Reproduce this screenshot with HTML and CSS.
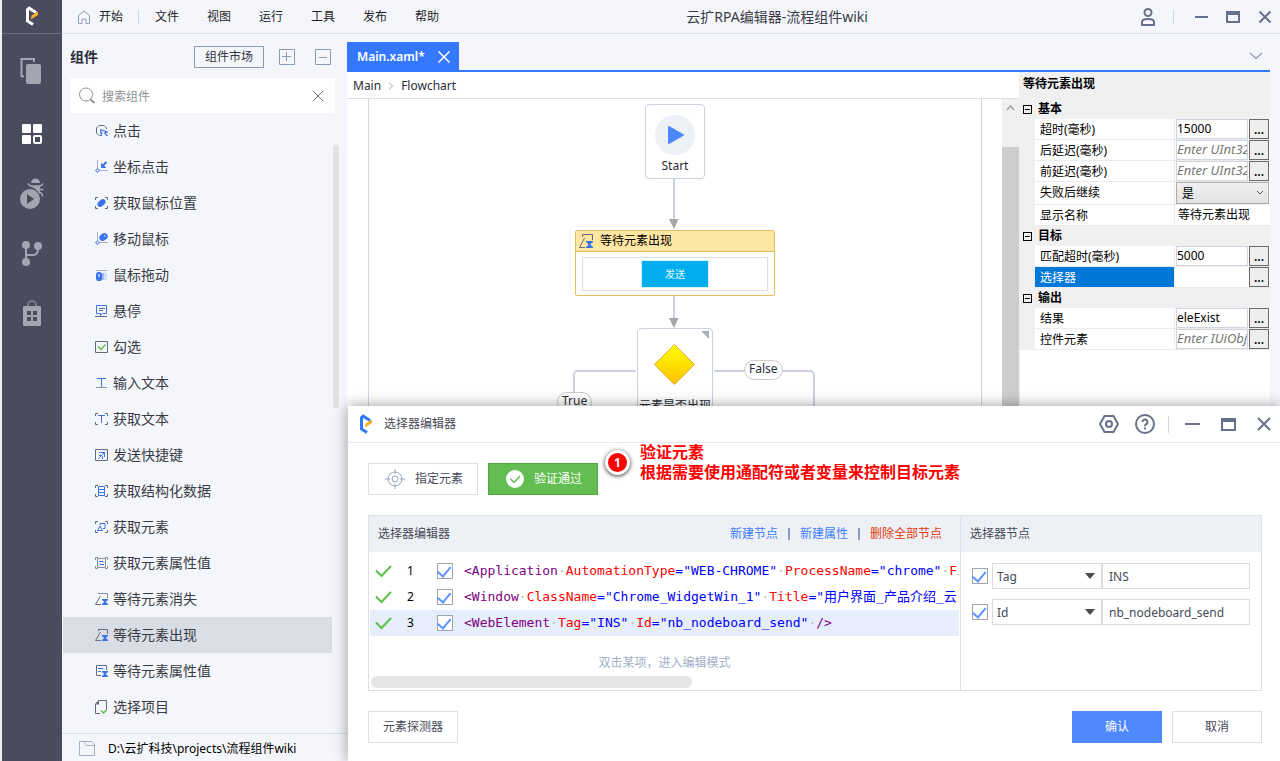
FILE: index.html
```html
<!DOCTYPE html>
<html lang="zh-CN">
<head>
<meta charset="utf-8">
<title>云扩RPA编辑器-流程组件wiki</title>
<link rel="stylesheet" href="styles.css">
</head>
<body>
<div class="app">
  <nav class="rail" aria-label="主导航">
    <div class="rail-logo">
      <svg width="14" height="21" viewBox="0 0 14 21"><path d="M8 18.500 2.500 15V3.600L4.200 2.200 11 6.600" fill="none" stroke="#fff" stroke-width="3"/><path d="M6.500 9.600 13 5.600V9L6 13.400z" fill="#fbb02d"/></svg>
    </div>
    <button class="rail-btn" aria-label="复制"><svg width="24" height="28" viewBox="0 0 24 28"><path d="M4 19.500H1.500M1.500 20V2H14v3" fill="none" stroke="#a3a5b0" stroke-width="2"/><rect x="6" y="7" width="15" height="20" rx="2" fill="#a3a5b0"/></svg></button>
    <button class="rail-btn" aria-label="组件"><svg width="22" height="22" viewBox="0 0 22 22"><g fill="#fff"><rect x="1" y="1" width="9" height="9" rx="1"/><rect x="12" y="1" width="9" height="9" rx="1"/><rect x="1" y="12" width="9" height="9" rx="1"/></g><rect x="13" y="13" width="7" height="7" rx="1" fill="none" stroke="#fff" stroke-width="2"/></svg></button>
    <button class="rail-btn" aria-label="调试"><svg width="24" height="32" viewBox="0 0 24 32"><circle cx="10" cy="21" r="10" fill="#a3a5b0"/><path d="M7 16v10l7-5z" fill="#4a4c5e"/><path d="M11 5a4.500 4.500 0 0 1 9 0z" fill="#a3a5b0"/><path d="M11 8h9v4c0 2-1 3-1 4-1-3-4-6-8-7z" fill="#a3a5b0"/><path d="M8 5.500c1 2 2 2.500 4 2.500h7c2 0 3-.5 4-2.500M19 11.500h4.500M19 14.500c2 0 3.500 1 3.500 4" fill="none" stroke="#a3a5b0" stroke-width="1.500"/></svg></button>
    <button class="rail-btn" aria-label="版本"><svg width="22" height="28" viewBox="0 0 22 28"><g fill="#a3a5b0"><circle cx="5" cy="5" r="4"/><circle cx="17" cy="6" r="4"/><circle cx="5" cy="22" r="4"/></g><path d="M5 5v17M5 15h7c4 0 5-2 5-6" fill="none" stroke="#a3a5b0" stroke-width="2"/></svg></button>
    <button class="rail-btn" aria-label="应用"><svg width="20" height="28" viewBox="0 0 20 28"><path d="M6 7V5a4 4 0 0 1 8 0v2" fill="none" stroke="#777988" stroke-width="2"/><rect x="1" y="6" width="18" height="20" rx="1" fill="#a3a5b0"/><path d="M5 11h4v4H5zM11 11h4v4h-4zM5 17h4v4H5zM11 17h4v4h-4z" fill="#4a4c5e"/></svg></button>
  </nav>

  <div class="main">
    <header class="topbar">
      <svg class="home" width="14" height="14" viewBox="0 0 14 14"><path d="M1.500 5.500 7 1l5.500 4.500v8H9V9H5v4.500H1.500z" fill="none" stroke="#8e9bb5"/></svg>
      <nav class="menu">
        <button>开始</button><i class="bar"></i><button>文件</button><button>视图</button><button>运行</button><button>工具</button><button>发布</button><button>帮助</button>
      </nav>
      <h1 class="app-title">云扩RPA编辑器-流程组件wiki</h1>
      <div class="win-tools">
        <button aria-label="用户"><svg width="14" height="18" viewBox="0 0 14 18"><circle cx="7" cy="4.500" r="3.500" fill="none" stroke="#67718a" stroke-width="2"/><path d="M1 17v-3c0-2 2-3 6-3s6 1 6 3v3z" fill="none" stroke="#67718a" stroke-width="2"/></svg></button>
        <i class="bar"></i>
        <button aria-label="最小化"><svg width="14" height="14" viewBox="0 0 14 14"><path d="M1 7h13" stroke="#67718a" stroke-width="2"/></svg></button>
        <button aria-label="最大化"><svg width="14" height="14" viewBox="0 0 14 14"><path d="M1 3h12v9H1z" fill="none" stroke="#67718a" stroke-width="2"/><path d="M0 1h14v4H0z" fill="#67718a"/></svg></button>
        <button aria-label="关闭"><svg width="14" height="14" viewBox="0 0 14 14"><path d="M1.500 1.500l11 11M12.500 1.500l-11 11" stroke="#67718a" stroke-width="2"/></svg></button>
      </div>
    </header>

    <div class="body">
      <aside class="sidebar">
        <div class="side-head">
          <h2>组件</h2>
          <button class="market">组件市场</button>
          <button class="sq" aria-label="展开"><svg width="16" height="16" viewBox="0 0 16 16"><path d="M.5.5h15v15H.5zM3 7.500h9M7.500 3v9" fill="none" stroke="#8e9bb5"/></svg></button>
          <button class="sq" aria-label="收起"><svg width="16" height="16" viewBox="0 0 16 16"><path d="M.5.5h15v15H.5zM4 8.500h8" fill="none" stroke="#8e9bb5"/></svg></button>
        </div>
        <div class="search">
          <svg width="18" height="18" viewBox="0 0 18 18"><circle cx="8" cy="7.500" r="6.500" fill="none" stroke="#8f9298"/><path d="M12.500 12.500 16.500 16" stroke="#8f9298" stroke-width="2"/></svg>
          <input type="text" placeholder="搜索组件" aria-label="搜索组件">
          <button aria-label="清除"><svg width="12" height="12" viewBox="0 0 12 12"><path d="M1 1l10 10M11 1 1 11" stroke="#6d717a"/></svg></button>
        </div>
        <div class="list-wrap">
          <ul class="list">
            <li><svg viewBox="0 0 14 14"><path d="M4.500 11.500H4L1.500 9V4L4 1.500h5L11.500 4v1" fill="none" stroke="#626b80"/><path d="M5.500 5.500 12 8 9.500 9 12.500 12M5.500 12 7 8.500M5.500 5.500 6.500 12" fill="none" stroke="#3b74e8" stroke-width="1.300"/></svg>点击</li>
            <li><svg viewBox="0 0 14 14"><path d="M2.500 0v13M0 10.500h13" stroke="#aab0bf"/><path d="M11.500 2 8 5.500" stroke="#3b74e8" stroke-width="2"/><path d="M6 2.500V8h5.500z" fill="#3b74e8"/><circle cx="2.500" cy="10.500" r="1.500" fill="#fff" stroke="#3b74e8"/></svg>坐标点击</li>
            <li><svg viewBox="0 0 14 14"><path d="M.5 4V1.500H3M10 1.500h2.500V4M.5 10v2.500H3M10 12.500h2.500V10" fill="none" stroke="#626b80"/><ellipse cx="6.500" cy="7" rx="4.500" ry="3" transform="rotate(-40 6.500 7)" fill="#3b74e8"/></svg>获取鼠标位置</li>
            <li><svg viewBox="0 0 14 14"><path d="M2.500 0v13M0 10.500h13" stroke="#aab0bf"/><ellipse cx="8.500" cy="5" rx="4.500" ry="3.500" transform="rotate(-35 8.500 5)" fill="#3b74e8"/><path d="M9 3.500l1.500 1" stroke="#fff"/><circle cx="2.500" cy="10.500" r="1.500" fill="#fff" stroke="#3b74e8"/></svg>移动鼠标</li>
            <li><svg viewBox="0 0 14 14"><path d="M1 2.500h11" stroke="#aab0bf"/><rect x="8" y="5" width="4" height="7" fill="#d5e1fb"/><rect x="5" y="5" width="4" height="7" fill="#9dbbf5"/><rect x="1" y="4" width="6" height="9" rx="2.500" fill="#3b74e8"/><path d="M4 6v3" stroke="#fff"/></svg>鼠标拖动</li>
            <li><svg viewBox="0 0 14 14"><path d="M1.500 1.500h10v8H7.500l-2 2v-2h-4z" fill="none" stroke="#3b74e8"/><path d="M4 4.500h6M4 6.500h4M0 12.500h12" stroke="#626b80"/></svg>悬停</li>
            <li><svg viewBox="0 0 14 14"><path d="M.5 1.500h12v11H.5z" fill="none" stroke="#626b80"/><path d="M3 6.500 6 9.500 10.500 4.500" fill="none" stroke="#5fbf4d" stroke-width="1.500"/></svg>勾选</li>
            <li><svg viewBox="0 0 14 14"><path d="M2 2.500h9M6.500 2.500v9" stroke="#3b74e8"/><path d="M1 11.500h11" stroke="#8e95a5"/></svg>输入文本</li>
            <li><svg viewBox="0 0 14 14"><path d="M.5 4V1.500H3M10 1.500h2.500V4M.5 10v2.500H3M10 12.500h2.500V10" fill="none" stroke="#626b80"/><path d="M3 3.500h7M6.500 3.500V11" stroke="#3b74e8"/></svg>获取文本</li>
            <li><svg viewBox="0 0 14 14"><path d="M.5 1.500h12v11H.5z" fill="none" stroke="#626b80"/><path d="M4 4.500h5.500V9M9.500 4.500 3.500 10.500M4 7.500h2M7.500 8v3" fill="none" stroke="#3b74e8"/></svg>发送快捷键</li>
            <li><svg viewBox="0 0 14 14"><path d="M.5 4V1.500H3M10 1.500h2.500V4M.5 10v2.500H3M10 12.500h2.500V10" fill="none" stroke="#626b80"/><path d="M3.500 2.500h6v9h-6zM3.500 5.500h6M3.500 8.500h6" fill="none" stroke="#3b74e8"/></svg>获取结构化数据</li>
            <li><svg viewBox="0 0 14 14"><path d="M.5 4V1.500H3M10 1.500h2.500V4M.5 10v2.500H3M10 12.500h2.500V10" fill="none" stroke="#626b80"/><path d="M5 5V3.500h5v5H8M5 6 2.500 10.500h5z" fill="none" stroke="#3b74e8"/></svg>获取元素</li>
            <li><svg viewBox="0 0 14 14"><path d="M.5 4V1.500H3M10 1.500h2.500V4M.5 10v2.500H3M10 12.500h2.500V10M2.500 2.500h8v9h-8z" fill="none" stroke="#8a90a0"/><path d="M4 5.500h4l1 1M9 8.500H5L4 7.500" fill="none" stroke="#3b74e8"/></svg>获取元素属性值</li>
            <li><svg viewBox="0 0 14 14"><path d="M3.500 1.500h9V6" fill="none" stroke="#626b80" stroke-dasharray="2 1"/><path d="M5.500 4 .5 12.500H6" fill="none" stroke="#626b80"/><path d="M7 7h6v1.500h-1L11 10l1 1.500h1V13H7v-1.500h1L9 10 8 8.500H7z" fill="#3b74e8"/></svg>等待元素消失</li>
            <li class="on"><svg viewBox="0 0 14 14"><path d="M3.500 3V1.500h9V6M5.500 4 .5 12.500H6" fill="none" stroke="#626b80"/><path d="M7 7h6v1.500h-1L11 10l1 1.500h1V13H7v-1.500h1L9 10 8 8.500H7z" fill="#3b74e8"/></svg>等待元素出现</li>
            <li><svg viewBox="0 0 14 14"><path d="M6 11.500H1.500v-10h10V6" fill="none" stroke="#626b80"/><path d="M3 4.500h5l1 1M3 7.500h3" fill="none" stroke="#3b74e8"/><path d="M7 7h6v1.500h-1L11 10l1 1.500h1V13H7v-1.500h1L9 10 8 8.500H7z" fill="#3b74e8"/></svg>等待元素属性值</li>
            <li><svg viewBox="0 0 14 14"><path d="M5 13.500H.5V4L3.500.5h8V9" fill="none" stroke="#626b80"/><path d="M.5 4.500 4 .5V4.500z" fill="#626b80"/><path d="M6 10.500 8.500 13 12 9.500" fill="none" stroke="#5fbf4d" stroke-width="1.500"/></svg>选择项目</li>
          </ul>
          <div class="side-scroll"><i></i></div>
        </div>
        <div class="side-foot">
          <svg width="16" height="15" viewBox="0 0 16 15"><path d="M.5 14.500V.5H13L15.500 3v11.500zM5 .5 7.500 4.500h8" fill="none" stroke="#a3afc5"/></svg>
          <span>D:\云扩科技\projects\流程组件wiki</span>
        </div>
      </aside>

      <section class="workspace">
        <div class="tabs">
          <div class="tab"><span>Main.xaml*</span><button aria-label="关闭标签"><svg width="12" height="12" viewBox="0 0 12 12"><path d="M.5.5l11 11M11.500.5l-11 11" stroke="#fff" stroke-width="1.500"/></svg></button></div>
          <button class="tabs-more" aria-label="更多"><svg width="14" height="8" viewBox="0 0 14 8"><path d="M1 1l6 5.500L13 1" fill="none" stroke="#8e9bb5" stroke-width="1.300"/></svg></button>
        </div>
        <div class="split">
          <div class="designer">
            <div class="crumbs"><span>Main</span><svg width="6" height="8" viewBox="0 0 6 8"><path d="M1 .5 4.500 4 1 7.500" fill="none" stroke="#ccd2de" stroke-width="1.500"/></svg><span>Flowchart</span></div>
            <div class="canvas-row">
              <div class="canvas">
                <svg class="wires" width="612" height="320" viewBox="0 0 612 320"><g fill="none" stroke="#ccd2e1" stroke-width="2"><path d="M305 80v42M305 197v24M267 272H209a4 4 0 0 0-4 4v30M345 272h96a4 4 0 0 1 4 4v44"/></g><path d="M300 120h9.500l-4.500 10zM300 219h9.500l-4.500 10z" fill="#a6a6a6"/></svg>
                <div class="node start"><svg width="40" height="40" viewBox="0 0 40 40"><circle cx="20" cy="20" r="20" fill="#edf0f5"/><path d="M14 12v16l14-8z" fill="#4d88ff" stroke="#4d88ff" stroke-width="2" stroke-linejoin="round"/></svg><span>Start</span></div>
                <div class="node activity">
                  <div class="act-head"><svg width="14" height="14" viewBox="0 0 14 14"><path d="M3.500 3V.5h10V6M5.500 4 .5 13.500H6" fill="none" stroke="#626b80"/><path d="M7 7h7v1.500h-1l-1.500 2 1.500 2h1V14H7v-1.500h1l1.500-2-1.500-2H7z" fill="#3b74e8"/></svg>等待元素出现</div>
                  <div class="act-body"><span class="thumb">发送</span></div>
                </div>
                <div class="node decision"><svg width="76" height="62" viewBox="0 0 76 62"><defs><linearGradient id="gold" x1="0" y1="0" x2="0" y2="1"><stop offset="0" stop-color="#ffff00"/><stop offset="1" stop-color="#ffc000"/></linearGradient></defs><path d="M64 2h8v8z" fill="#a9b2c0"/><path d="M37.500 15.500 57.500 35.500 37.500 55.500 17.500 35.500z" fill="url(#gold)" stroke="#dfae35"/></svg><span>元素是否出现</span></div>
                <span class="pill yes">True</span>
                <span class="pill no">False</span>
              </div>
              <div class="vscroll"><svg width="17" height="17" viewBox="0 0 17 17"><path d="M5 11l3.500-4L12 11" fill="none" stroke="#a0a0a0" stroke-width="1.500"/></svg><i></i></div>
            </div>
          </div>

          <div class="props">
            <h3 class="props-title">等待元素出现</h3>
            <h4 class="cat"><i></i>基本</h4>
            <div class="prop"><label for="p1">超时(毫秒)</label><input id="p1" value="15000"><button>...</button></div>
            <div class="prop"><label for="p2">后延迟(毫秒)</label><input id="p2" placeholder="Enter UInt32"><button>...</button></div>
            <div class="prop"><label for="p3">前延迟(毫秒)</label><input id="p3" placeholder="Enter UInt32"><button>...</button></div>
            <div class="prop tall"><label for="p4">失败后继续</label><span class="combo"><select id="p4"><option>是</option><option>否</option></select><svg width="8" height="6" viewBox="0 0 8 6"><path d="M1 1l3 3 3-3" fill="none" stroke="#555"/></svg></span></div>
            <div class="prop wide"><label for="p5">显示名称</label><input id="p5" class="plain" value="等待元素出现"></div>
            <h4 class="cat"><i></i>目标</h4>
            <div class="prop"><label for="p6">匹配超时(毫秒)</label><input id="p6" value="5000"><button>...</button></div>
            <div class="prop on"><label for="p7">选择器</label><input id="p7" class="plain"><button>...</button></div>
            <h4 class="cat"><i></i>输出</h4>
            <div class="prop"><label for="p8">结果</label><input id="p8" value="eleExist"><button>...</button></div>
            <div class="prop"><label for="p9">控件元素</label><input id="p9" placeholder="Enter IUiObj"><button>...</button></div>
          </div>
        </div>
      </section>
    </div>
  </div>

  <section class="dialog" role="dialog" aria-label="选择器编辑器">
    <header class="dlg-head">
      <svg width="14" height="21" viewBox="0 0 14 21"><path d="M8 18.500 2.500 15V3.600L4.200 2.200 11 6.600" fill="none" stroke="#3478ff" stroke-width="3"/><path d="M6.500 9.600 13 5.600V9L6 13.400z" fill="#fbb02d"/></svg>
      <h2>选择器编辑器</h2>
      <button aria-label="设置"><svg width="20" height="20" viewBox="0 0 20 20"><path d="M5.500 2h9L19 10l-4.500 8h-9L1 10z" fill="none" stroke="#67718a" stroke-width="2"/><circle cx="10" cy="10" r="3" fill="none" stroke="#67718a" stroke-width="2"/></svg></button>
      <button aria-label="帮助"><svg width="20" height="20" viewBox="0 0 20 20"><circle cx="10" cy="10" r="9" fill="none" stroke="#67718a" stroke-width="2"/><path d="M7.500 8a2.500 2.500 0 1 1 4 2c-1 .7-1.500 1-1.500 2.200M10 13.500v2" fill="none" stroke="#67718a" stroke-width="2"/></svg></button>
      <i class="bar"></i>
      <button aria-label="最小化"><svg width="16" height="16" viewBox="0 0 16 16"><path d="M0 8h15" stroke="#67718a" stroke-width="2"/></svg></button>
      <button aria-label="最大化"><svg width="16" height="16" viewBox="0 0 16 16"><path d="M1 4h13v10H1z" fill="none" stroke="#67718a" stroke-width="2"/><path d="M0 2h15v4H0z" fill="#67718a"/></svg></button>
      <button aria-label="关闭"><svg width="16" height="16" viewBox="0 0 16 16"><path d="M1 2l12 12M13 2 1 14" stroke="#67718a" stroke-width="2"/></svg></button>
    </header>

    <div class="dlg-body">
      <div class="actions">
        <button class="btn pick"><svg width="20" height="20" viewBox="0 0 20 20"><g fill="none" stroke="#98a4bc"><circle cx="10" cy="10" r="7"/><circle cx="10" cy="10" r="3"/><path d="M10 0v5M10 15v5M0 10h5M15 10h5"/></g></svg>指定元素</button>
        <button class="btn pass"><svg width="18" height="18" viewBox="0 0 18 18"><circle cx="9" cy="9" r="9" fill="#fff"/><path d="M4.500 9 8 12.500 14 6" fill="none" stroke="#62be50" stroke-width="1.500"/></svg>验证通过</button>
      </div>

      <div class="panels">
        <div class="nodes">
          <div class="panel-head">
            <h3>选择器编辑器</h3>
            <button>新建节点</button><i class="bar"></i><button>新建属性</button><i class="bar"></i><button class="danger">删除全部节点</button>
          </div>
          <div class="code-row"><svg width="18" height="14" viewBox="0 0 18 14"><path d="M1 6.500 6.500 12 16 2" fill="none" stroke="#5fbf4d" stroke-width="2"/></svg><label for="n1">1</label><input type="checkbox" id="n1" checked><code>&lt;Application<s>·</s><b>AutomationType</b><u>="WEB-CHROME"</u><s>·</s><b>ProcessName</b><u>="chrome"</u><s>·</s><b>Fi</b></code></div>
          <div class="code-row"><svg width="18" height="14" viewBox="0 0 18 14"><path d="M1 6.500 6.500 12 16 2" fill="none" stroke="#5fbf4d" stroke-width="2"/></svg><label for="n2">2</label><input type="checkbox" id="n2" checked><code>&lt;Window<s>·</s><b>ClassName</b><u>="Chrome_WidgetWin_1"</u><s>·</s><b>Title</b><u>="用户界面_产品介绍_云</u></code></div>
          <div class="code-row on"><svg width="18" height="14" viewBox="0 0 18 14"><path d="M1 6.500 6.500 12 16 2" fill="none" stroke="#5fbf4d" stroke-width="2"/></svg><label for="n3">3</label><input type="checkbox" id="n3" checked><code>&lt;WebElement<s>·</s><b>Tag</b><u>="INS"</u><s>·</s><b>Id</b><u>="nb_nodeboard_send"</u><s>·</s>/&gt;</code></div>
          <p class="hint">双击某项，进入编辑模式</p>
          <div class="hscroll"><i></i></div>
        </div>
        <div class="attrs">
          <div class="panel-head"><h3>选择器节点</h3></div>
          <div class="attr"><input type="checkbox" checked aria-label="启用 Tag"><span class="pickbox"><select aria-label="属性"><option>Tag</option></select></span><input type="text" value="INS" aria-label="Tag 值"></div>
          <div class="attr"><input type="checkbox" checked aria-label="启用 Id"><span class="pickbox"><select aria-label="属性"><option>Id</option></select></span><input type="text" value="nb_nodeboard_send" aria-label="Id 值"></div>
        </div>
      </div>

      <footer class="dlg-foot">
        <button class="btn probe">元素探测器</button>
        <button class="btn primary">确认</button>
        <button class="btn">取消</button>
      </footer>
    </div>

    <div class="note"><span class="num">1</span><p>验证元素<br>根据需要使用通配符或者变量来控制目标元素</p></div>
  </section>
</div>
</body>
</html>
```

FILE: styles.css
```css
* { box-sizing: border-box; }
body {
  margin: 0;
  font: 12px/16px "Noto Sans", "Noto Sans CJK SC", sans-serif;
  color: #2b2d38;
  background: #f5f6fb;
}
h1, h2, h3, h4, p, ul { margin: 0; padding: 0; font-size: 12px; font-weight: 400; }
button, input, select { font: inherit; color: inherit; margin: 0; border-radius: 0; }
button { padding: 0; border: 0; background: none; display: flex; align-items: center; justify-content: center; }
svg { flex: none; display: block; }
input { outline: 0; min-width: 0; }

.app { position: relative; display: flex; height: 100vh; overflow: hidden; border-left: 2px solid #eff1ef; }
.main { flex: 1; min-width: 0; display: flex; flex-direction: column; }
.bar { width: 1px; height: 14px; background: #d3d7e0; }

.rail { width: 60px; background: #4a4c5e; display: flex; flex-direction: column; }
.rail-logo { height: 34px; border-bottom: 1px solid #6c6e7f; display: flex; align-items: center; justify-content: center; }
.rail-btn { height: 60px; }
.rail-logo + .rail-btn { height: 70px; padding-top: 4px; }

.topbar { height: 34px; border-bottom: 1px solid #dcdfe8; display: flex; align-items: center; padding: 0 8px 0 15px; }
.menu { display: flex; align-items: center; gap: 28px; margin-left: 8px; color: #1e1f26; }
.menu .bar { margin: 0 -12px 0 -13px; }
.app-title { flex: 1; text-align: center; font-size: 14px; line-height: 20px; color: #3a3c48; }
.win-tools { display: flex; align-items: center; gap: 18px; padding-left: 26px; }
.win-tools .bar { margin-right: 2px; }

.body { flex: 1; min-height: 0; display: flex; }
.sidebar { width: 285px; display: flex; flex-direction: column; }
.side-head { display: flex; align-items: center; padding: 12px 16px 10px 8px; }
.side-head h2 { flex: 1; font-size: 14px; font-weight: 700; line-height: 20px; }
.market { width: 70px; height: 22px; border: 1px solid #8e9bb5; color: #33353f; }
.sq { margin-left: 15px; }
.sq + .sq { margin-left: 20px; }
.search { height: 35px; margin: 0 12px 0 8px; padding: 0 11px 0 8px; background: #fff; display: flex; align-items: center; gap: 6px; }
.search input { flex: 1; border: 0; background: none; padding: 2px 0 0; }
.search input::placeholder { color: #8f9298; opacity: 1; }
.list-wrap { flex: 1; min-height: 0; overflow: hidden; display: flex; }
.list { flex: 1; list-style: none; }
.list li { height: 36px; margin-left: 1px; padding-left: 32px; display: flex; align-items: center; gap: 4px; font-size: 14px; color: #3a3c45; }
.list li svg { width: 14px; height: 14px; }
.list li.on { background: #d9dde6; }
.side-scroll { width: 15px; padding: 32px 8px 0 1px; }
.side-scroll i { display: block; height: 263px; border-radius: 3px; background: #e1e2e4; }
.side-foot { height: 28px; border-top: 1px solid #dcdfe8; display: flex; align-items: center; gap: 13px; padding: 2px 0 0 17px; color: #000; }

.workspace { flex: 1; min-width: 0; display: flex; flex-direction: column; padding-right: 10px; }
.tabs { height: 38px; border-bottom: 2px solid #3478ff; display: flex; align-items: flex-end; justify-content: space-between; padding-right: 7px; }
.tab { width: 112px; height: 28px; background: #3478ff; color: #fff; font-weight: 600; display: flex; align-items: center; justify-content: space-between; padding: 1px 9px 0 10px; }
.tabs-more { height: 28px; }
.split { flex: 1; min-height: 0; display: flex; background: #fff; }
.designer { flex: 1; min-width: 0; display: flex; flex-direction: column; }
.crumbs { height: 27px; border-bottom: 1px solid #dde0e9; display: flex; align-items: center; gap: 7px; padding: 2px 0 0 6px; }
.canvas-row { flex: 1; min-height: 0; display: flex; }
.canvas { flex: 1; position: relative; overflow: hidden; margin: 0 20px 0 21px; border: solid #d0d5e2; border-width: 0 1px; }
.wires { position: absolute; left: 0; top: 0; }
.node { position: absolute; background: #fff; border: 1px solid #ccd2e1; border-radius: 4px; }
.start { left: 276px; top: 5px; width: 60px; height: 75px; display: flex; flex-direction: column; align-items: center; padding-top: 10px; gap: 3px; }
.activity { left: 206px; top: 131px; width: 200px; border-color: #e6bd5e; border-radius: 2px; }
.act-head { height: 21px; border-bottom: 1px solid #e6bd5e; background: #ffe6a2; display: flex; align-items: center; gap: 7px; padding: 0 3px 1px; color: #000; }
.act-body { height: 34px; margin: 5px 6px 4px; border: 1px solid #dedede; display: flex; align-items: center; justify-content: center; }
.thumb { width: 68px; height: 28px; border: 1px solid #d8f0fa; background: #00aeef; color: #e0f6ff; font-size: 10px; line-height: 26px; text-align: center; }
.decision { left: 268px; top: 229px; width: 76px; height: 96px; display: flex; flex-direction: column; align-items: center; gap: 7px; }
.pill { position: absolute; background: #fff; border: 1px solid #ccc; border-radius: 10px; height: 20px; line-height: 16px; padding: 0 4px; }
.pill.yes { left: 188px; top: 293px; }
.pill.no { left: 375px; top: 261px; }
.vscroll { width: 17px; background: #f0f0f0; display: flex; flex-direction: column; gap: 31px; }
.vscroll i { flex: 1; background: #cdcdcd; }

.props { width: 251px; background: #fff; border-left: 1px solid #f0f0f0; color: #000; }
.props-title { height: 27px; padding: 3px 3px 0; background: #f0f0f0; font-weight: 700; line-height: 18px; }
.cat { height: 20px; padding: 0 3px; background: #f0f0f0; display: flex; align-items: center; gap: 6px; font-weight: 700; }
.cat i { width: 9px; height: 9px; border: 1px solid #000; background: linear-gradient(#000, #000) center / 5px 1px no-repeat; }
.prop { height: 21px; display: grid; grid-template-columns: 140px 1fr 20px; grid-template-rows: 20px; column-gap: 1px; padding-right: 1px; border-left: 15px solid #f0f0f0; border-bottom: 1px solid #ececec; }
.prop label { padding-left: 5px; line-height: 22px; border-right: 1px solid #ececec; white-space: nowrap; }
.prop input { width: 100%; height: 20px; border: 1px solid #d0d5e2; padding: 0 0 2px; background: #fff; }
.prop input::placeholder { color: #777; opacity: 1; font-style: italic; font-size: 13px; }
.prop input.plain { border: 0; padding-left: 2px; }
.prop button { height: 20px; border: 1px solid #6a6a6a; background: #eee; padding-top: 2px; font-weight: 600; line-height: 12px; }
.prop.wide, .prop.tall { grid-template-columns: 140px 1fr; }
.prop.tall { height: 23px; grid-template-rows: 22px; }
.prop.on label { background: #0078d7; color: #fff; }
.combo { position: relative; display: flex; }
.combo select { flex: 1; appearance: none; border: 1px solid #acacac; background: linear-gradient(#f0f0f0, #e3e3e3); padding: 1px 5px 0; }
.combo svg { position: absolute; right: 5px; top: 8px; pointer-events: none; }

.dialog { position: absolute; left: 346px; right: 0; top: 406px; bottom: 0; background: #fff; box-shadow: 0 0 14px rgba(0, 0, 0, .4); color: #474a58; display: flex; flex-direction: column; }
.dlg-head { height: 37px; border-bottom: 1px solid #e6e8f2; display: flex; align-items: center; padding: 0 7px 0 11px; }
.dlg-head h2 { flex: 1; margin-left: 11px; }
.dlg-head button { margin-left: 20px; }
.dlg-head button + button { margin-left: 16px; }
.dlg-head .bar { margin: 0 -4px 0 13px; height: 17px; }
.dlg-head .bar ~ button + button { margin-left: 20px; }
.dlg-body { flex: 1; padding: 20px 18px 18px 20px; display: flex; flex-direction: column; gap: 20px; }
.actions, .dlg-foot { display: flex; gap: 10px; }
.btn { width: 90px; height: 32px; border: 1px solid #dcdfe6; background: #fff; }
.pick, .pass { width: 110px; gap: 10px; padding-left: 2px; }
.pass { background: #62be50; border-color: #54a644; color: #fff; }
.primary { background: #4d88ff; border-color: #4d88ff; color: #fff; }
.probe { margin-right: auto; }

.panels { height: 176px; border: 1px solid #dcdfe6; display: flex; }
.nodes { flex: 1; min-width: 0; }
.attrs { width: 301px; border-left: 1px solid #dfe3ee; }
.panel-head { height: 36px; background: #edf0f5; display: flex; align-items: center; gap: 10px; padding: 0 18px 0 9px; }
.nodes .panel-head { margin-bottom: 6px; }
.panel-head h3 { flex: 1; }
.panel-head button { color: #3d7dff; }
.panel-head .danger { color: #e03a10; }
.panel-head .bar { width: 2px; height: 12px; background: #8e9bb5; }
.code-row { height: 26px; margin: 0 1px; padding-left: 5px; display: flex; align-items: center; overflow: hidden; }
.code-row.on { background: #e6edfb; }
.code-row label { flex: none; width: 30px; margin-left: 14px; color: #000; }
code { flex: none; margin-left: 11px; font: 13px/26px "DejaVu Sans Mono", "Noto Sans CJK SC", monospace; color: #800080; white-space: pre; }
code b { font-weight: 400; color: #f00; }
code u { text-decoration: none; color: #00f; }
code s { text-decoration: none; color: #bbb; }
.hint { margin-top: 19px; text-align: center; color: #a3b0c9; }
.hscroll { margin: 5px 3px 0 2px; }
.hscroll i { display: block; width: 321px; height: 12px; border-radius: 6px; background: #e5e5e5; }
input[type="checkbox"] { appearance: none; flex: none; width: 16px; height: 16px; border: 1px solid #a0a4ac; background: #fff; display: flex; justify-content: center; }
input[type="checkbox"]:checked::after { content: ""; width: 6px; height: 11px; border: solid #5c94ff; border-width: 0 2px 2px 0; transform: rotate(40deg); transform-origin: 50% 40%; }
.attr { display: flex; align-items: center; padding: 0 11px; margin-top: 10px; }
.panel-head + .attr { margin-top: 11px; }
.attr input[type="text"] { flex: 1; height: 26px; border: 1px solid #dcdcdc; padding: 0 6px; }
.pickbox { position: relative; display: flex; width: 110px; margin-left: 4px; }
.pickbox select { flex: 1; height: 26px; appearance: none; border: 1px solid #dcdcdc; background: #fff; padding: 1px 4px 0; }
.pickbox::after { content: ""; position: absolute; right: 7px; top: 10px; border: 5px solid transparent; border-top: 6px solid #4a4a4a; border-bottom: 0; pointer-events: none; }

.note { position: absolute; left: 257px; top: 36px; display: flex; align-items: center; gap: 10px; color: #f00; }
.note p { font-size: 16px; line-height: 20px; font-weight: 700; }
.num { width: 25px; height: 25px; border: 3px solid #fff; border-radius: 50%; background: #f00; color: #fff; font-weight: 700; line-height: 19px; text-align: center; box-shadow: 0 1px 4px rgba(0, 0, 0, .8); }
```
